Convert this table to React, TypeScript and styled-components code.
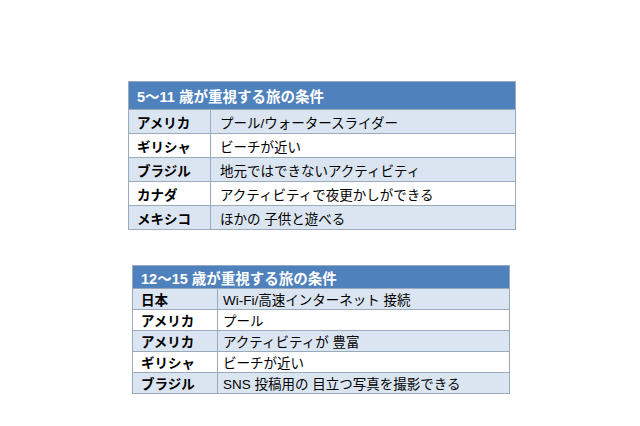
import styled, { createGlobalStyle } from 'styled-components'

const GlobalStyle = createGlobalStyle`
  html, body {
    margin: 0;
    padding: 0;
    background: #ffffff;
  }
  body {
    font-family: "Liberation Sans", "Noto Sans CJK JP", sans-serif;
    color: #000000;
  }
`

const Page = styled.div`
  display: flex;
  flex-direction: column;
  align-items: flex-start;
  width: 640px;
  height: 426px;
  padding-top: 81px;
  box-sizing: border-box;
`

const Table = styled.table<{ $left: number; $width: number; $top: number }>`
  margin-left: ${(p) => p.$left}px;
  margin-top: ${(p) => p.$top}px;
  width: ${(p) => p.$width}px;
  border-collapse: collapse;
  table-layout: fixed;
  border: 1px solid #9aaabd;
`

const NameCol = styled.col<{ $width: number }>`
  width: ${(p) => p.$width}px;
`

const HeaderCell = styled.th<{ $height: number; $pad: number }>`
  height: ${(p) => p.$height}px;
  padding: 0 0 0 ${(p) => p.$pad}px;
  background: #4f81bd;
  color: #ffffff;
  font-size: 14.5px;
  font-weight: bold;
  text-align: left;
  border: 1px solid #9aaabd;
  box-sizing: border-box;
`

const Row = styled.tr<{ $shaded: boolean; $height: number }>`
  height: ${(p) => p.$height}px;
  background: ${(p) => (p.$shaded ? '#dbe5f1' : '#ffffff')};
`

const NameCell = styled.td<{ $pad: number }>`
  padding: 0 0 0 ${(p) => p.$pad}px;
  font-size: 13.5px;
  font-weight: bold;
  border: 1px solid #9aaabd;
  white-space: nowrap;
  box-sizing: border-box;
`

const ValueCell = styled.td<{ $pad: number }>`
  padding: 0 0 0 ${(p) => p.$pad}px;
  font-size: 13.5px;
  border: 1px solid #9aaabd;
  white-space: pre;
  box-sizing: border-box;
`

type Item = { name: string; value: string }

const kids: Item[] = [
  { name: 'アメリカ', value: 'プール/ウォータースライダー' },
  { name: 'ギリシャ', value: 'ビーチが近い' },
  { name: 'ブラジル', value: '地元ではできないアクティビティ' },
  { name: 'カナダ', value: 'アクティビティで夜更かしができる' },
  { name: 'メキシコ', value: 'ほかの 子供と遊べる' },
]

const teens: Item[] = [
  { name: '日本', value: 'Wi-Fi/高速インターネット 接続' },
  { name: 'アメリカ', value: 'プール' },
  { name: 'アメリカ', value: 'アクティビティが 豊富' },
  { name: 'ギリシャ', value: 'ビーチが近い' },
  { name: 'ブラジル', value: 'SNS 投稿用の 目立つ写真を撮影できる' },
]

type ConditionTableProps = {
  title: string
  items: Item[]
  left: number
  top: number
  width: number
  nameWidth: number
  headHeight: number
  rowHeight: number
  pad: number
  valuePad: number
}

const ConditionTable = ({
  title,
  items,
  left,
  top,
  width,
  nameWidth,
  headHeight,
  rowHeight,
  pad,
  valuePad,
}: ConditionTableProps) => (
  <Table $left={left} $top={top} $width={width}>
    <colgroup>
      <NameCol $width={nameWidth} />
      <col />
    </colgroup>
    <thead>
      <tr>
        <HeaderCell colSpan={2} $height={headHeight} $pad={pad}>
          {title}
        </HeaderCell>
      </tr>
    </thead>
    <tbody>
      {items.map((item, index) => (
        <Row key={index} $shaded={index % 2 === 0} $height={rowHeight}>
          <NameCell $pad={pad}>{item.name}</NameCell>
          <ValueCell $pad={valuePad}>{item.value}</ValueCell>
        </Row>
      ))}
    </tbody>
  </Table>
)

const App = () => (
  <>
    <GlobalStyle />
    <Page>
      <ConditionTable
        title="5〜11 歳が重視する旅の条件"
        items={kids}
        left={128}
        top={0}
        width={388}
        nameWidth={82}
        headHeight={28}
        rowHeight={24}
        pad={8}
        valuePad={9}
      />
      <ConditionTable
        title="12〜15 歳が重視する旅の条件"
        items={teens}
        left={132}
        top={35}
        width={378}
        nameWidth={85}
        headHeight={23}
        rowHeight={20}
        pad={8}
        valuePad={5}
      />
    </Page>
  </>
)

export default App
